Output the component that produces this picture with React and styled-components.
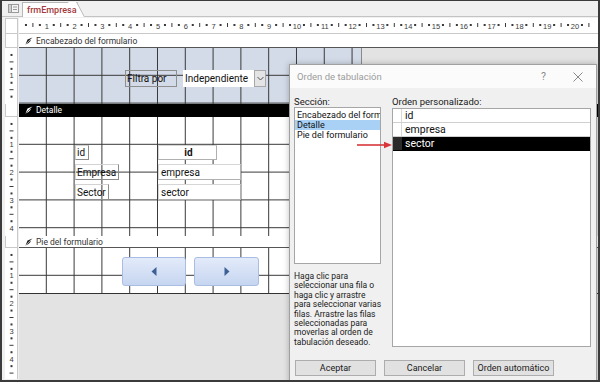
import React from "react";
import styled, { createGlobalStyle, css } from "styled-components";

const FONT = `Roboto, "Noto Sans", "Liberation Sans", sans-serif`;
const STEP = 27.8;

const GlobalStyle = createGlobalStyle`
  html, body { margin: 0; padding: 0; background: #ffffff; }
  body { font-family: ${FONT}; }
`;

// ---------- rulers (drawings) ----------

function HRuler({ width }) {
    const q = STEP / 4;
    const marks = [];
    for (let i = 1; i * q < width - 4; i++) {
        const x = i * q;
        if (i % 4 === 0) {
            marks.push(
                <text key={i} x={x} y={10.5} textAnchor="middle">
                    {i / 4}
                </text>
            );
        } else if (i % 2 === 0) {
            marks.push(<line key={i} x1={x} x2={x} y1={5} y2={9} />);
        } else {
            marks.push(<rect key={i} x={x - 0.5} y={6.5} width={1} height={1} />);
        }
    }
    return (
        <RulerSvg width={width} height={15}>
            {marks}
        </RulerSvg>
    );
}

function VRuler({ height }) {
    const q = STEP / 4;
    const marks = [];
    for (let i = 1; i * q < height - 4; i++) {
        const y = i * q;
        if (i % 4 === 0) {
            marks.push(
                <text key={i} x={6.5} y={y + 2.5} textAnchor="middle">
                    {i / 4}
                </text>
            );
        } else if (i % 2 === 0) {
            marks.push(<line key={i} x1={4.5} x2={8.5} y1={y} y2={y} />);
        } else {
            marks.push(<rect key={i} x={6} y={y - 0.5} width={1} height={1} />);
        }
    }
    return (
        <VRulerBox $h={height}>
            <RulerSvg width={12} height={height}>
                {marks}
            </RulerSvg>
        </VRulerBox>
    );
}

function SectionIcon({ light }) {
    const c = light ? "#ffffff" : "#222222";
    return (
        <svg width="8" height="8" viewBox="0 0 8 8">
            <path d="M7.5 0.5 L2.5 2.5 L0.5 7.5 L3.5 6 L6.2 3.2 L4.2 3.6 L7.5 0.5 Z" fill={c} />
            <path d="M1.2 6.8 L4.8 3.2" stroke={light ? "#000" : "#fff"} strokeWidth="0.6" />
        </svg>
    );
}

const helpLines = [
    "Haga clic para",
    "seleccionar una fila o",
    "haga clic y arrastre",
    "para seleccionar varias",
    "filas. Arrastre las filas",
    "seleccionadas para",
    "moverlas al orden de",
    "tabulación deseado.",
];

function App() {
    return (
        <>
            <GlobalStyle />
            <Frame>
                <TabBar>
                    <FormIcon width="11" height="9" viewBox="0 0 11 9">
                        <rect x="0.5" y="0.5" width="10" height="8" fill="#f4f4f4" stroke="#9a9a9a" />
                        <rect x="0.5" y="0.5" width="3" height="8" fill="#cfcfcf" stroke="#9a9a9a" />
                        <line x1="5" x2="9" y1="3" y2="3" stroke="#9a9a9a" />
                        <line x1="5" x2="9" y1="5.5" y2="5.5" stroke="#9a9a9a" />
                    </FormIcon>
                    <Tab>
                        <span>frmEmpresa</span>
                    </Tab>
                </TabBar>

                <Designer>
                    <LeftColumn>
                        <Corner />
                        <Selector $h={14} />
                        <VRuler height={56} />
                        <Selector $h={13} />
                        <VRuler height={119} />
                        <Selector $h={12} />
                        <VRuler height={131} />
                    </LeftColumn>

                    <MainColumn>
                        <RulerRow>
                            <HRuler width={579} />
                        </RulerRow>

                        <SectionBar $h={14}>
                            <SectionIcon />
                            Encabezado del formulario
                        </SectionBar>
                        <Section $h={56}>
                            <FormArea $bg="#d3dbe8">
                                <Label $x={106} $y={22} $w={52} $h={17} $flat>
                                    Filtra por
                                </Label>
                                <Combo $x={164} $y={22} $w={83} $h={17}>
                                    <span>Independiente</span>
                                    <ComboButton>
                                        <svg width="7" height="5" viewBox="0 0 7 5">
                                            <polyline points="0.5,1 3.5,4 6.5,1" fill="none" stroke="#555" strokeWidth="1" />
                                        </svg>
                                    </ComboButton>
                                </Combo>
                            </FormArea>
                            <Canvas />
                        </Section>

                        <SectionBar $h={13} $selected>
                            <SectionIcon light />
                            Detalle
                        </SectionBar>
                        <Section $h={119}>
                            <FormArea $bg="#ffffff">
                                <Label $x={56} $y={28} $w={14} $h={15}>id</Label>
                                <TextBox $x={139} $y={28} $w={59} $h={15} $bold>
                                    id
                                </TextBox>
                                <Label $x={56} $y={47} $w={44} $h={16}>Empresa</Label>
                                <TextBox $x={139} $y={47} $w={83} $h={16}>empresa</TextBox>
                                <Label $x={56} $y={67} $w={34} $h={16}>Sector</Label>
                                <TextBox $x={139} $y={67} $w={83} $h={16}>sector</TextBox>
                            </FormArea>
                            <Canvas />
                        </Section>

                        <SectionBar $h={12}>
                            <SectionIcon />
                            Pie del formulario
                        </SectionBar>
                        <Section $h={46} $closed>
                            <FormArea $bg="#ffffff">
                                <NavButton $x={103} $w={64}>
                                    <svg width="6" height="9" viewBox="0 0 6 9">
                                        <polygon points="5.5,0 0.5,4.5 5.5,9" fill="#3d6094" />
                                    </svg>
                                </NavButton>
                                <NavButton $x={175} $w={65}>
                                    <svg width="6" height="9" viewBox="0 0 6 9">
                                        <polygon points="0.5,0 5.5,4.5 0.5,9" fill="#3d6094" />
                                    </svg>
                                </NavButton>
                            </FormArea>
                            <Canvas />
                        </Section>
                        <Canvas />
                    </MainColumn>
                </Designer>

                <Dialog>
                    <TitleBar>
                        <Title>Orden de tabulación</Title>
                        <HelpMark>?</HelpMark>
                        <svg width="10" height="10" viewBox="0 0 10 10">
                            <path d="M0.5 0.5 L9.5 9.5 M9.5 0.5 L0.5 9.5" stroke="#8a8a8a" strokeWidth="1" />
                        </svg>
                    </TitleBar>
                    <DialogBody>
                        <Columns>
                            <Column $w={87}>
                                <FieldLabel>Sección:</FieldLabel>
                                <ListBox $h={157}>
                                    <SectionItem>Encabezado del formu</SectionItem>
                                    <SectionItem $active>Detalle</SectionItem>
                                    <SectionItem>Pie del formulario</SectionItem>
                                </ListBox>
                                <HelpText>
                                    {helpLines.map((line) => (
                                        <HelpLine key={line}>{line}</HelpLine>
                                    ))}
                                </HelpText>
                            </Column>
                            <Column $w={199}>
                                <FieldLabel>Orden personalizado:</FieldLabel>
                                <ListBox $h={239}>
                                    {["id", "empresa", "sector"].map((name, i) => (
                                        <OrderRow key={name} $selected={i === 2}>
                                            <RowSelector $selected={i === 2} />
                                            {name}
                                        </OrderRow>
                                    ))}
                                </ListBox>
                            </Column>
                        </Columns>
                        <ButtonRow>
                            <DialogButton>Aceptar</DialogButton>
                            <DialogButton>Cancelar</DialogButton>
                            <DialogButton>Orden automático</DialogButton>
                        </ButtonRow>
                    </DialogBody>
                    <Pointer width="36" height="8" viewBox="0 0 36 8">
                        <line x1="0" y1="4" x2="29" y2="4" stroke="#d8363a" strokeWidth="1.6" />
                        <polygon points="27,0.8 35,4 27,7.2" fill="#d8363a" />
                    </Pointer>
                </Dialog>
            </Frame>
        </>
    );
}

export default App;

// ---------- window ----------

const Frame = styled.div`
    position: relative;
    width: 600px;
    height: 382px;
    box-sizing: border-box;
    border: 2px solid #3b3b3b;
    border-top-width: 1px;
    background: #f0f0f0;
    overflow: hidden;
    font-family: ${FONT};
    display: flex;
    flex-direction: column;
`;

const TabBar = styled.div`
    height: 15px;
    flex: none;
    display: flex;
    align-items: flex-end;
    gap: 3px;
    padding-left: 6px;
    background: #f0f0f0;
    border-bottom: 1px solid #c3c3c3;
`;

const FormIcon = styled.svg`
    margin-bottom: 3px;
`;

const Tab = styled.div`
    position: relative;
    height: 14px;
    margin-bottom: -1px;
    padding: 0 1px 0 4px;
    background: #ffffff;
    border: 1px solid #b8b8b8;
    border-right: none;
    border-bottom: none;
    color: #a33a3c;
    font-size: 9px;
    font-weight: 500;
    line-height: 14px;

    span {
        position: relative;
        z-index: 1;
    }

    &::after {
        content: "";
        position: absolute;
        top: -1px;
        right: -7px;
        width: 8px;
        height: 15px;
        background: #ffffff;
        border-right: 1px solid #b8b8b8;
        transform: skewX(28deg);
        transform-origin: bottom left;
    }
`;

const Designer = styled.div`
    flex: 1;
    display: flex;
    padding: 1px 0 0 3px;
    min-height: 0;
`;

const LeftColumn = styled.div`
    width: 13px;
    flex: none;
    display: flex;
    flex-direction: column;
    margin-right: 1px;
    overflow: hidden;
`;

const Corner = styled.div`
    height: 16px;
    flex: none;
    box-sizing: border-box;
    background: #ffffff;
    border: 1px solid #c9c9c9;
`;

const Selector = styled.div`
    height: ${(p) => p.$h}px;
    flex: none;
    box-sizing: border-box;
    background: #ffffff;
    border: 1px solid #c9c9c9;
    border-top: none;
`;

const VRulerBox = styled.div`
    height: ${(p) => p.$h}px;
    flex: none;
    background: #ffffff;
    border-right: 1px solid #c9c9c9;
    overflow: hidden;
`;

const RulerSvg = styled.svg`
    display: block;
    fill: #3a3a3a;
    stroke: #3a3a3a;
    stroke-width: 1;

    text {
        stroke: none;
        font-family: "Liberation Sans", Arial, sans-serif;
        font-size: 7.5px;
    }
`;

const MainColumn = styled.div`
    flex: 1;
    display: flex;
    flex-direction: column;
    min-width: 0;
`;

const RulerRow = styled.div`
    height: 16px;
    flex: none;
    box-sizing: border-box;
    background: #ffffff;
    border-bottom: 1px solid #c9c9c9;
    overflow: hidden;
`;

const SectionBar = styled.div`
    height: ${(p) => p.$h}px;
    flex: none;
    box-sizing: border-box;
    display: flex;
    align-items: center;
    gap: 3px;
    padding-left: 6px;
    font-size: 8.5px;
    background: ${(p) => (p.$selected ? "#000000" : "#ffffff")};
    color: ${(p) => (p.$selected ? "#ffffff" : "#333333")};
    border-bottom: 1px solid ${(p) => (p.$selected ? "#000000" : "#555555")};
`;

const Section = styled.div`
    height: ${(p) => p.$h}px;
    flex: none;
    display: flex;
    box-sizing: border-box;
    ${(p) =>
        p.$closed &&
        css`
            border-bottom: 1px solid #333333;
        `}
`;

const FormArea = styled.div`
    position: relative;
    width: 343px;
    flex: none;
    box-sizing: border-box;
    border-right: 1px solid #8a8a8a;
    background-color: ${(p) => p.$bg};
    background-image: linear-gradient(to right, transparent 26.8px, #383838 26.8px, #383838 27.8px),
        linear-gradient(to bottom, transparent 27px, #383838 27px, #383838 28px);
    background-size: 27.8px 27.8px;
`;

const Canvas = styled.div`
    flex: 1;
    background: #e3e3e3;
`;

// ---------- form controls (placed on the design canvas) ----------

const placed = css`
    position: absolute;
    left: ${(p) => p.$x}px;
    top: ${(p) => p.$y}px;
    width: ${(p) => p.$w}px;
    height: ${(p) => p.$h}px;
    box-sizing: border-box;
    font-size: 10px;
    white-space: nowrap;
    overflow: hidden;
    display: flex;
    align-items: center;
`;

const Label = styled.div`
    ${placed};
    padding-left: 1px;
    color: #111111;
    border: 1px solid;
    border-color: ${(p) => (p.$flat ? "#8f8f8f" : "#d2d2d2 #8c8c8c #8c8c8c #d2d2d2")};
`;

const TextBox = styled.div`
    ${placed};
    padding-left: 2px;
    background: #ffffff;
    color: #111111;
    border: 1px solid;
    border-color: #d6d6d6 #b0b0b0 #b0b0b0 #d6d6d6;
    justify-content: ${(p) => (p.$bold ? "center" : "flex-start")};
    font-weight: ${(p) => (p.$bold ? 700 : 400)};
`;

const Combo = styled.div`
    ${placed};
    padding-left: 2px;
    background: #ffffff;
    color: #111111;
    justify-content: space-between;

    span {
        flex: 1;
    }
`;

const ComboButton = styled.div`
    width: 12px;
    height: 100%;
    box-sizing: border-box;
    display: flex;
    align-items: center;
    justify-content: center;
    background: #e4e4e4;
    border: 1px solid #a8a8a8;
`;

const NavButton = styled.div`
    position: absolute;
    left: ${(p) => p.$x}px;
    top: 9px;
    width: ${(p) => p.$w}px;
    height: 29px;
    box-sizing: border-box;
    display: flex;
    align-items: center;
    justify-content: center;
    border: 1px solid #a9bde2;
    border-radius: 3px;
    background: linear-gradient(to bottom, #e3ebfa, #c6d5f0);
`;

// ---------- dialog ----------

const Dialog = styled.div`
    position: absolute;
    left: 287px;
    top: 63px;
    width: 308px;
    height: 330px;
    box-sizing: border-box;
    background: #f0f0f0;
    border: 1px solid #a0a0a0;
    box-shadow: 0 0 6px rgba(0, 0, 0, 0.25);
    display: flex;
    flex-direction: column;
`;

const TitleBar = styled.div`
    height: 23px;
    flex: none;
    display: flex;
    align-items: center;
    padding: 0 13px 0 7px;
    background: #fbfbfb;
`;

const Title = styled.div`
    flex: 1;
    font-size: 9.5px;
    color: #9b9b9b;
`;

const HelpMark = styled.div`
    font-size: 10.5px;
    color: #8a8a8a;
    margin-right: 27px;
`;

const DialogBody = styled.div`
    flex: 1;
    display: flex;
    flex-direction: column;
    padding: 8px 5px 0 4px;
`;

const Columns = styled.div`
    height: 251px;
    display: flex;
    gap: 11px;
`;

const Column = styled.div`
    width: ${(p) => p.$w}px;
    display: flex;
    flex-direction: column;
`;

const FieldLabel = styled.div`
    height: 12px;
    font-size: 9.5px;
    line-height: 11px;
    color: #1a1a1a;
`;

const ListBox = styled.div`
    height: ${(p) => p.$h}px;
    flex: none;
    box-sizing: border-box;
    background: #ffffff;
    border: 1px solid #a6a6a6;
    overflow: hidden;
`;

const SectionItem = styled.div`
    height: 10px;
    padding-left: 2px;
    font-size: 9px;
    line-height: 10px;
    white-space: nowrap;
    overflow: hidden;
    color: #111111;
    background: ${(p) => (p.$active ? "#a9d1f5" : "transparent")};

    &:first-child {
        margin-top: 2px;
    }
`;

const HelpText = styled.div`
    margin-top: 8px;
    font-size: 8.5px;
    line-height: 9.4px;
    color: #1a1a1a;
`;

const HelpLine = styled.div`
    white-space: nowrap;
`;

const OrderRow = styled.div`
    height: 14px;
    box-sizing: border-box;
    display: flex;
    align-items: center;
    gap: 3px;
    font-size: 10.5px;
    border-bottom: 1px solid ${(p) => (p.$selected ? "#000000" : "#cfcfcf")};
    background: ${(p) => (p.$selected ? "#000000" : "#ffffff")};
    color: ${(p) => (p.$selected ? "#ffffff" : "#111111")};
`;

const RowSelector = styled.div`
    width: 9px;
    height: 100%;
    box-sizing: border-box;
    background: ${(p) => (p.$selected ? "#2b2b2b" : "#ffffff")};
    border-right: 1px solid ${(p) => (p.$selected ? "#2b2b2b" : "#d8d8d8")};
`;

const ButtonRow = styled.div`
    display: flex;
    gap: 8px;
    margin-top: 13px;
    padding-left: 1px;
`;

const DialogButton = styled.div`
    width: 81px;
    height: 16px;
    box-sizing: border-box;
    display: flex;
    align-items: center;
    justify-content: center;
    font-size: 9px;
    white-space: nowrap;
    color: #1a1a1a;
    background: #e1e1e1;
    border: 1px solid #adadad;
`;

const Pointer = styled.svg`
    position: absolute;
    left: 67px;
    top: 76px;
`;
